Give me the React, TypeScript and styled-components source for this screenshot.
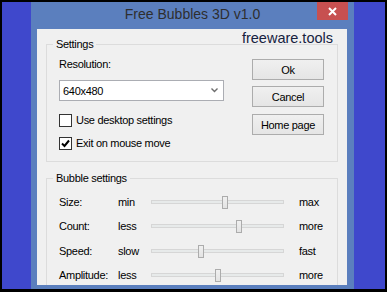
import React from 'react'
import styled, { createGlobalStyle } from 'styled-components'

const GlobalStyle = createGlobalStyle`
	html, body {
		margin: 0;
		padding: 0;
		background: #000;
	}
	body {
		font-family: "Liberation Sans", Arial, sans-serif;
	}
`

// row height tweaks follow the spacing of the original dialog
const sliders = [
	{ label: 'Size:', low: 'min', high: 'max', pos: 71, h: 23 },
	{ label: 'Count:', low: 'less', high: 'more', pos: 85, h: 26 },
	{ label: 'Speed:', low: 'slow', high: 'fast', pos: 47, h: 24 },
	{ label: 'Amplitude:', low: 'less', high: 'more', pos: 64, h: 24 },
]

const Check = () => (
	<svg width="9" height="9" viewBox="0 0 9 9">
		<path d="M1 4.5 L3.5 7 L8 1.5" fill="none" stroke="#000" strokeWidth="2" />
	</svg>
)

const Chevron = () => (
	<svg width="7" height="5" viewBox="0 0 7 5">
		<path d="M0.5 0.5 L3.5 3.5 L6.5 0.5" fill="none" stroke="#6d6d6d" strokeWidth="1.4" />
	</svg>
)

const CloseGlyph = () => (
	<svg width="9" height="9" viewBox="0 0 9 9">
		<path d="M1 1 L8 8 M8 1 L1 8" stroke="#fff" strokeWidth="2" />
	</svg>
)

export default function App() {
	return (
		<Screen>
			<GlobalStyle />
			<Desktop>
				<Window>
					<TitleBar>
						<Title>Free Bubbles 3D v1.0</Title>
						<CloseButton>
							<CloseGlyph />
						</CloseButton>
					</TitleBar>
					<Client>
						<Watermark>freeware.tools</Watermark>
						<Group>
							<Legend>Settings</Legend>
							<SettingsBody>
								<LeftColumn>
									<Label>Resolution:</Label>
									<Combo>
										<span>640x480</span>
										<Chevron />
									</Combo>
									<CheckRow>
										<Box />
										<span>Use desktop settings</span>
									</CheckRow>
									<CheckRow $gap={10}>
										<Box>
											<Check />
										</Box>
										<span>Exit on mouse move</span>
									</CheckRow>
								</LeftColumn>
								<ButtonColumn>
									<Button>Ok</Button>
									<Button $gap={7}>Cancel</Button>
									<Button $gap={0}>Home page</Button>
								</ButtonColumn>
							</SettingsBody>
						</Group>
						<Group $top={10}>
							<Legend>Bubble settings</Legend>
							<SliderList>
								{sliders.map((s) => (
									<SliderRow key={s.label} $h={s.h}>
										<RowLabel>{s.label}</RowLabel>
										<RowValue>{s.low}</RowValue>
										<Track>
											<Thumb style={{ left: s.pos }} />
										</Track>
										<RowEnd>{s.high}</RowEnd>
									</SliderRow>
								))}
							</SliderList>
						</Group>
					</Client>
				</Window>
			</Desktop>
		</Screen>
	)
}

const Screen = styled.div`
	width: 387px;
	height: 292px;
	box-sizing: border-box;
	padding: 2px 2px 3px 2px;
	background: #000;
	overflow: hidden;
`

const Desktop = styled.div`
	height: 100%;
	display: flex;
	padding-left: 29px;
	background: #3f48cc;
`

const Window = styled.div`
	width: 323px;
	display: flex;
	flex-direction: column;
	background: #5b7fbe;
`

const TitleBar = styled.div`
	height: 27px;
	display: grid;
	grid-template-columns: 1fr auto 1fr;
	flex-shrink: 0;
`

const Title = styled.div`
	grid-column: 2;
	padding-top: 4px;
	font-size: 14px;
	line-height: 16px;
	color: #2e2e2e;
	white-space: nowrap;
`

const CloseButton = styled.div`
	grid-column: 3;
	justify-self: end;
	align-self: start;
	width: 31px;
	height: 18px;
	margin-right: 6px;
	display: flex;
	align-items: center;
	justify-content: center;
	background: #c75050;
`

const Client = styled.div`
	flex: 1;
	position: relative;
	margin: 0 7px 4px 6px;
	padding: 9px 9px 0;
	background: #f0f0f0;
	overflow: hidden;
	font-size: 11px;
	letter-spacing: -0.3px;
	color: #000;
`

const Watermark = styled.div`
	position: absolute;
	top: 1px;
	right: 14px;
	font-size: 14.5px;
	line-height: 16px;
	letter-spacing: 0;
	color: #16223f;
`

const Group = styled.fieldset<{ $top?: number }>`
	margin: ${(p) => p.$top ?? 0}px 0 0;
	padding: 0;
	min-width: 0;
	border: 1px solid #dcdcdc;
`

const Legend = styled.legend`
	margin-left: 6px;
	padding: 0 3px;
	font-size: 11px;
	line-height: 12px;
`

const SettingsBody = styled.div`
	display: flex;
	justify-content: space-between;
	padding: 9px 13px 11px 12px;
`

const LeftColumn = styled.div`
	display: flex;
	flex-direction: column;
	width: 165px;
`

const Label = styled.div`
	line-height: 11px;
`

const Combo = styled.div`
	margin-top: 10px;
	height: 21px;
	box-sizing: border-box;
	display: flex;
	align-items: center;
	justify-content: space-between;
	padding: 0 5px 0 3px;
	border: 1px solid #abadb3;
	background: #fff;
`

const CheckRow = styled.div<{ $gap?: number }>`
	margin-top: ${(p) => p.$gap ?? 13}px;
	display: flex;
	align-items: center;
	gap: 4px;
	height: 13px;
	line-height: 13px;
	white-space: nowrap;
`

const Box = styled.div`
	width: 13px;
	height: 13px;
	box-sizing: border-box;
	border: 1px solid #333;
	background: #fff;
	display: flex;
	align-items: center;
	justify-content: center;
`

const ButtonColumn = styled.div`
	display: flex;
	flex-direction: column;
	width: 72px;
`

const Button = styled.div<{ $gap?: number }>`
	height: 21px;
	box-sizing: border-box;
	margin-bottom: ${(p) => p.$gap ?? 6}px;
	display: flex;
	align-items: center;
	justify-content: center;
	border: 1px solid #acacac;
	background: linear-gradient(#f0f0f0, #e5e5e5);
`

const SliderList = styled.div`
	padding: 6px 0 0 12px;
`

const SliderRow = styled.div<{ $h: number }>`
	height: ${(p) => p.$h}px;
	display: flex;
	align-items: center;
	white-space: nowrap;
`

const RowLabel = styled.div`
	width: 59px;
`

const RowValue = styled.div`
	width: 33px;
`

const Track = styled.div`
	position: relative;
	width: 133px;
	height: 4px;
	box-sizing: border-box;
	border: 1px solid #d6d6d6;
	background: #e7eaea;
`

const Thumb = styled.div`
	position: absolute;
	top: -5px;
	width: 6px;
	height: 13px;
	box-sizing: border-box;
	margin-left: -1px;
	border: 1px solid #acacac;
	background: linear-gradient(#f0f0f0, #e3e3e3);
`

const RowEnd = styled.div`
	margin-left: 15px;
`
